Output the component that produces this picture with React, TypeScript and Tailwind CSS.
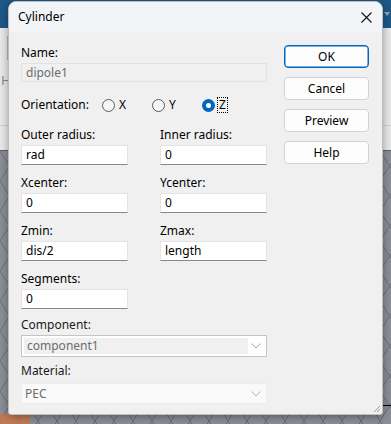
import React from 'react';

const font = { fontFamily: '"Noto Sans", "Liberation Sans", sans-serif' };

function Lattice() {
  return (
    <svg className="block w-full h-full">
      <defs>
        <pattern id="lat" width="19" height="30" patternUnits="userSpaceOnUse">
          <path d="M0 0L19 30M19 0L0 30" stroke="#6a6e76" strokeWidth="1" fill="none" />
        </pattern>
      </defs>
      <rect width="100%" height="100%" fill="#8b8e96" />
      <rect width="100%" height="100%" fill="url(#lat)" />
    </svg>
  );
}

function Field({ value }: { value: string }) {
  return (
    <div className="h-[20px] bg-white border border-[#e4e4e4] border-b-[#878787] pl-[4px] flex items-center text-[12px] leading-none text-black">
      {value}
    </div>
  );
}

function Label({ text, muted }: { text: string; muted?: boolean }) {
  return <div className={`h-[16px] leading-[16px] text-[12px] ${muted ? 'text-[#1a1a1a]' : 'text-black'}`}>{text}</div>;
}

function Radio({ label, checked }: { label: string; checked?: boolean }) {
  return (
    <div className="w-[50px] flex items-center gap-[3px]">
      {checked ? (
        <div className="w-[13px] h-[13px] rounded-full bg-[#0067c0] flex items-center justify-center">
          <div className="w-[5px] h-[5px] rounded-full bg-white" />
        </div>
      ) : (
        <div className="w-[13px] h-[13px] rounded-full border border-[#5c5c5c] bg-[#f5f5f5]" />
      )}
      <span className={`text-[12px] leading-[14px] px-[1px] ${checked ? 'outline-1 outline-dotted outline-black' : ''}`}>{label}</span>
    </div>
  );
}

function Chevron({ color }: { color: string }) {
  return (
    <svg width="10" height="6" viewBox="0 0 10 6">
      <path d="M0.5 0.5L5 5L9.5 0.5" stroke={color} strokeWidth="1" fill="none" />
    </svg>
  );
}

function Button({ text, primary }: { text: string; primary?: boolean }) {
  return (
    <div
      className={`h-[23px] rounded-[4px] bg-[#fdfdfd] flex items-center justify-center text-[12px] text-black border ${
        primary ? 'border-[#0067c0] shadow-[inset_0_0_0_0.5px_#0067c0]' : 'border-[#d3d3d3]'
      }`}
    >
      {text}
    </div>
  );
}

export default function App() {
  return (
    <div className="relative w-[391px] h-[424px] overflow-hidden flex flex-col" style={font}>
      {/* desktop behind the dialog */}
      <div className="h-[28px] bg-[#1d5887] flex justify-end items-center pr-[1px]">
        <div className="w-0 h-0 border-l-[3px] border-r-[3px] border-t-[4px] border-l-transparent border-r-transparent border-t-[#9aa4ae]" />
      </div>
      <div className="h-[122px] bg-[#e9e9e9] relative">
        <div className="absolute left-[7px] top-[8px] w-px h-[24px] bg-[#b8b8b8]" />
        <div className="absolute left-[1px] top-[43px] text-[13px] text-[#8a8a8a]">H</div>
        <div className="absolute left-0 right-0 top-[97px] h-px bg-[#d2d2d2]" />
      </div>
      <div className="h-px bg-[#5d6068]" />
      <div className="flex-1 relative">
        <Lattice />
        <div className="absolute left-0 bottom-0 w-[30px] h-[10px] bg-[#d9733a] opacity-70" />
        <div className="absolute right-0 top-[254px] w-[8px] h-px bg-black" />
      </div>

      {/* dialog window */}
      <div className="absolute left-[8px] top-[1px] w-[375px] h-[414px] rounded-t-[8px] rounded-b-[3px] bg-[#f0f0f0] border border-[#bdbdbd] shadow-[0_2px_8px_rgba(0,0,0,0.35)] flex flex-col overflow-hidden">
        <div className="h-[30px] bg-[#f3f4f8] flex items-center justify-between pl-[9px] pr-[10px] shrink-0">
          <span className="text-[12px] text-black">Cylinder</span>
          <svg width="11" height="11" viewBox="0 0 11 11">
            <path d="M0.5 0.5L10.5 10.5M10.5 0.5L0.5 10.5" stroke="#111" strokeWidth="1.1" />
          </svg>
        </div>

        <div className="flex pl-[12px] pt-[13px] gap-[17px]">
          <div className="w-[246px] flex flex-col">
            <Label text="Name:" />
            <div className="mt-[2px] h-[19px] bg-[#f0f0f0] border border-[#e2e2e2] pl-[4px] flex items-center text-[12px] text-[#6d6d6d]">dipole1</div>

            <div className="mt-[15px] h-[16px] flex items-center">
              <div className="w-[81px] text-[12px] leading-[16px]">Orientation:</div>
              <Radio label="X" />
              <Radio label="Y" />
              <Radio label="Z" checked />
            </div>

            <div className="mt-[14px] grid grid-cols-2 gap-x-[32px] gap-y-[10px] w-[246px]">
              <div>
                <Label text="Outer radius:" />
                <div className="mt-[2px]"><Field value="rad" /></div>
              </div>
              <div>
                <Label text="Inner radius:" />
                <div className="mt-[2px]"><Field value="0" /></div>
              </div>
              <div>
                <Label text="Xcenter:" />
                <div className="mt-[2px]"><Field value="0" /></div>
              </div>
              <div>
                <Label text="Ycenter:" />
                <div className="mt-[2px]"><Field value="0" /></div>
              </div>
              <div>
                <Label text="Zmin:" />
                <div className="mt-[2px]"><Field value="dis/2" /></div>
              </div>
              <div>
                <Label text="Zmax:" />
                <div className="mt-[2px]"><Field value="length" /></div>
              </div>
              <div>
                <Label text="Segments:" />
                <div className="mt-[2px]"><Field value="0" /></div>
              </div>
            </div>

            <div className="mt-[8px]">
              <Label text="Component:" muted />
            </div>
            <div className="mt-[2px] h-[22px] border border-[#c4c4c4] bg-white p-[2px] flex items-center">
              <div className="h-full w-[224px] bg-[#f0f0f0] pl-[3px] flex items-center text-[12px] text-[#6d6d6d]">component1</div>
              <div className="flex-1 flex justify-center">
                <Chevron color="#a8a8a8" />
              </div>
            </div>

            <div className="mt-[6px]">
              <Label text="Material:" muted />
            </div>
            <div className="mt-[4px] h-[21px] bg-[#f9f9f9] border border-[#ececec] pl-[3px] flex items-center justify-between pr-[5px] text-[12px] text-[#6d6d6d]">
              <span>PEC</span>
              <Chevron color="#b4b4b4" />
            </div>
          </div>

          <div className="w-[85px] flex flex-col gap-[9px]">
            <Button text="OK" primary />
            <Button text="Cancel" />
            <Button text="Preview" />
            <Button text="Help" />
          </div>
        </div>

        <div className="flex-1" />
        <div className="flex justify-end pr-[1px] pb-[1px]">
          <svg width="9" height="9" viewBox="0 0 9 9">
            <path d="M8 2L2 8M8 5L5 8" stroke="#9a9a9a" strokeWidth="1" />
          </svg>
        </div>
      </div>
    </div>
  );
}
